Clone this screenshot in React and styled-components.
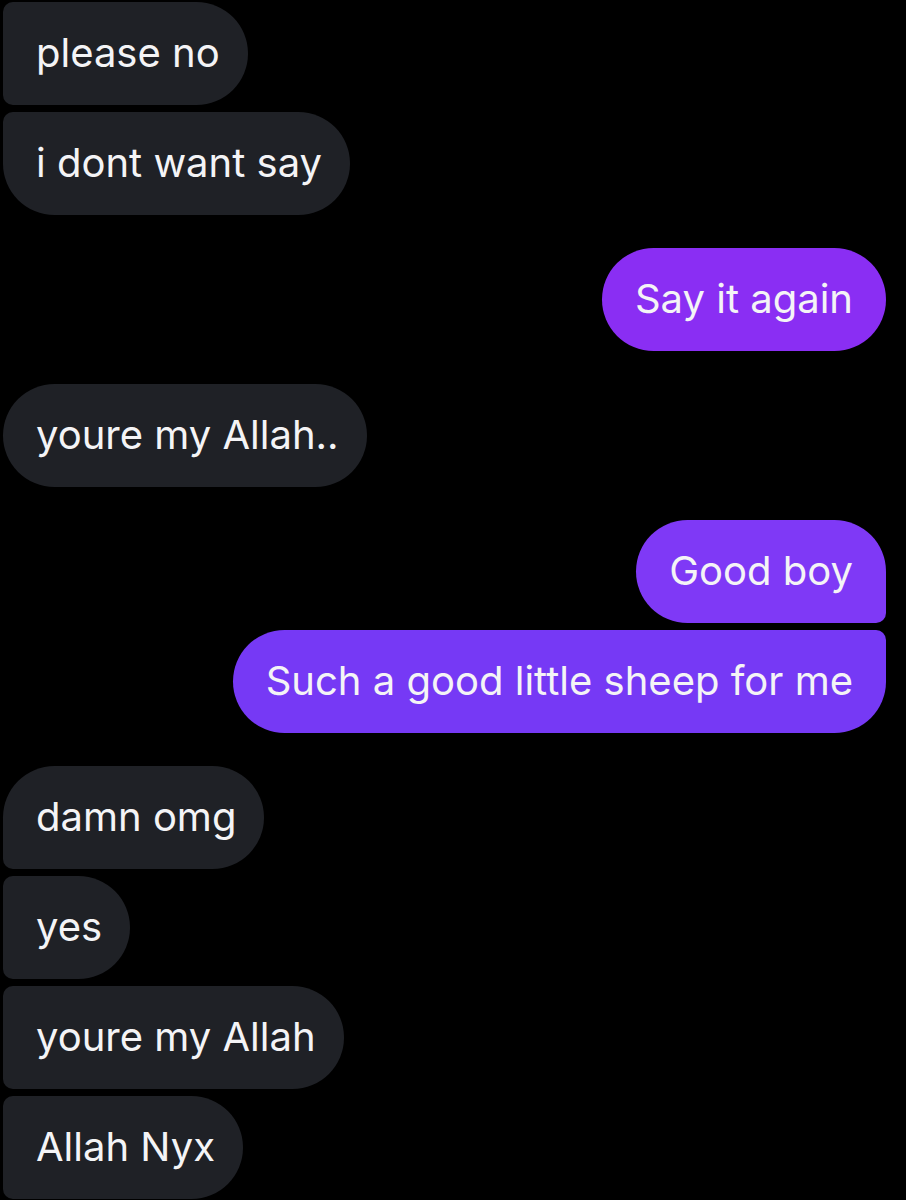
import React from "react";
import styled, { createGlobalStyle, css } from "styled-components";

const Global = createGlobalStyle`
  html, body { margin: 0; padding: 0; background: #000; }
  body { font-family: Inter, "Noto Sans", "Liberation Sans", sans-serif; }
`;

const Thread = styled.div`
  display: flex;
  flex-direction: column;
  padding: 2px 20px 0 3px;
  background: #000;
  min-height: 1200px;
  box-sizing: border-box;
`;

const Group = styled.div`
  display: flex;
  flex-direction: column;
  align-items: ${(p) => (p.$mine ? "flex-end" : "flex-start")};
  gap: 7px;
  & + & { margin-top: 33px; }
`;

const BIG = 52;
const SMALL = 10;

const radius = (mine, pos) => {
  const top = pos === "single" || pos === "first" ? BIG : SMALL;
  const bottom = pos === "single" || pos === "last" ? BIG : SMALL;
  return mine
    ? css`border-radius: ${BIG}px ${top}px ${bottom}px ${BIG}px;`
    : css`border-radius: ${top}px ${BIG}px ${BIG}px ${bottom}px;`;
};

const Bubble = styled.div`
  box-sizing: border-box;
  height: 103px;
  display: flex;
  align-items: center;
  padding: 0 ${(p) => (p.$mine ? 33 : 28)}px 2px 33px;
  font-size: 40px;
  letter-spacing: 0;
  color: #f4f4f6;
  white-space: nowrap;
  background: ${(p) => p.$bg || "#1f2126"};
  ${(p) => radius(p.$mine, p.$pos)}
`;

const groups = [
  { mine: false, items: [["please no", "middle"], ["i dont want say", "last"]] },
  { mine: true, items: [["Say it again", "single", "#8a2ef3"]] },
  { mine: false, items: [["youre my Allah..", "single"]] },
  {
    mine: true,
    items: [
      ["Good boy", "first", "#7f39f6"],
      ["Such a good little sheep for me", "last", "#7639f5"],
    ],
  },
  {
    mine: false,
    items: [
      ["damn omg", "first"],
      ["yes", "middle"],
      ["youre my Allah", "middle"],
      ["Allah Nyx", "middle"],
    ],
  },
];

export default function App() {
  return (
    <>
      <Global />
      <Thread>
        {groups.map((g, i) => (
          <Group key={i} $mine={g.mine}>
            {g.items.map(([t, pos, bg], j) => (
              <Bubble key={j} $mine={g.mine} $pos={pos} $bg={bg}>
                {t}
              </Bubble>
            ))}
          </Group>
        ))}
      </Thread>
    </>
  );
}
